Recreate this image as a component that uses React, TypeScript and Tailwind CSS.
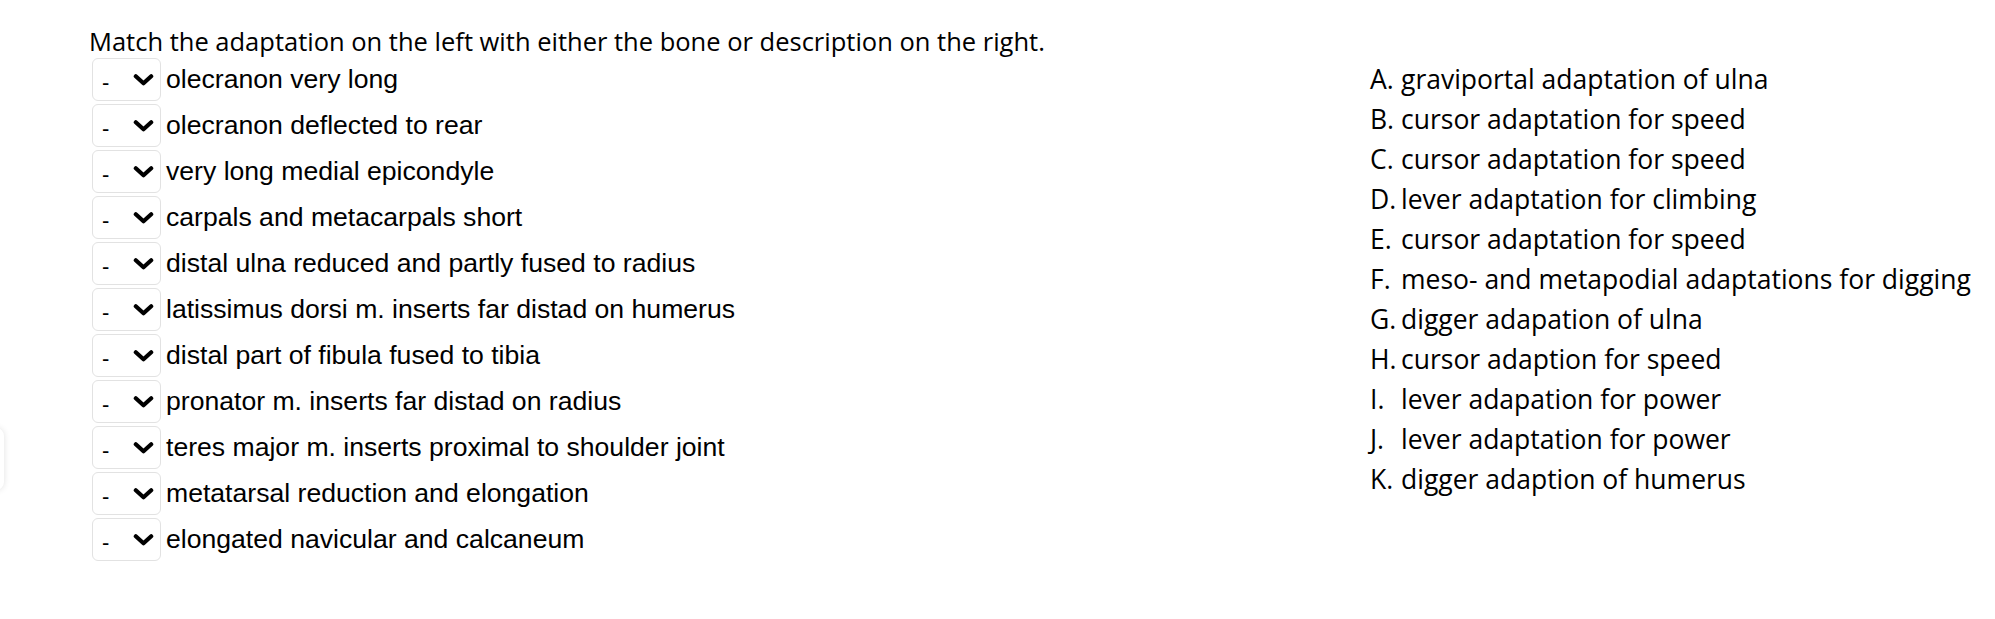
const items = [
  "olecranon very long",
  "olecranon deflected to rear",
  "very long medial epicondyle",
  "carpals and metacarpals short",
  "distal ulna reduced and partly fused to radius",
  "latissimus dorsi m. inserts far distad on humerus",
  "distal part of fibula fused to tibia",
  "pronator m. inserts far distad on radius",
  "teres major m. inserts proximal to shoulder joint",
  "metatarsal reduction and elongation",
  "elongated navicular and calcaneum",
];

const answers = [
  ["A.", "graviportal adaptation of ulna"],
  ["B.", "cursor adaptation for speed"],
  ["C.", "cursor adaptation for speed"],
  ["D.", "lever adaptation for climbing"],
  ["E.", "cursor adaptation for speed"],
  ["F.", "meso- and metapodial adaptations for digging"],
  ["G.", "digger adapation of ulna"],
  ["H.", "cursor adaption for speed"],
  ["I.", "lever adapation for power"],
  ["J.", "lever adaptation for power"],
  ["K.", "digger adaption of humerus"],
];

function Dropdown() {
  return (
    <div className="flex items-center w-[69px] h-[43px] shrink-0 border border-[#e2e2e2] rounded-[6px] bg-white pl-[9px] pr-[6px]">
      <span className="font-['Liberation_Sans',Arial,sans-serif] text-[22px] leading-none text-black mt-[6px]">-</span>
      <svg className="ml-auto" width="21" height="12" viewBox="0 0 21 12">
        <path d="M2.8 2.3 L10.5 9.2 L18.2 2.3" fill="none" stroke="#000" strokeWidth="4.2" strokeLinecap="round" strokeLinejoin="round" />
      </svg>
    </div>
  );
}

export default function App() {
  return (
    <div className="relative min-h-[619px] bg-white text-black pl-[89px] pt-[21px] overflow-hidden">
      {/* half-hidden floating tab at the left edge */}
      <div className="absolute left-[-40px] top-[428px] w-[44px] h-[62px] rounded-[8px] bg-white shadow-[0_0_6px_rgba(0,0,0,0.12)]" />

      <h1 className="font-['Open_Sans',sans-serif] text-[25.5px] leading-[40px] font-normal whitespace-nowrap">
        Match the adaptation on the left with either the bone or description on the right.
      </h1>

      <div className="flex">
        <div className="w-[1281px] shrink-0 flex flex-col gap-[3px] pl-[3px] -mt-[3px]">
          {items.map((t) => (
            <div key={t} className="flex items-center h-[43px]">
              <Dropdown />
              <span className="ml-[5px] font-['Liberation_Sans',Arial,sans-serif] text-[26.6px] leading-none whitespace-nowrap">
                {t}
              </span>
            </div>
          ))}
        </div>

        <ol className="font-['Open_Sans',sans-serif] text-[26.5px] leading-[40px] -mt-[2px]">
          {answers.map(([k, v]) => (
            <li key={k} className="flex whitespace-nowrap">
              <span className="w-[31px] shrink-0">{k}</span>
              <span>{v}</span>
            </li>
          ))}
        </ol>
      </div>
    </div>
  );
}
